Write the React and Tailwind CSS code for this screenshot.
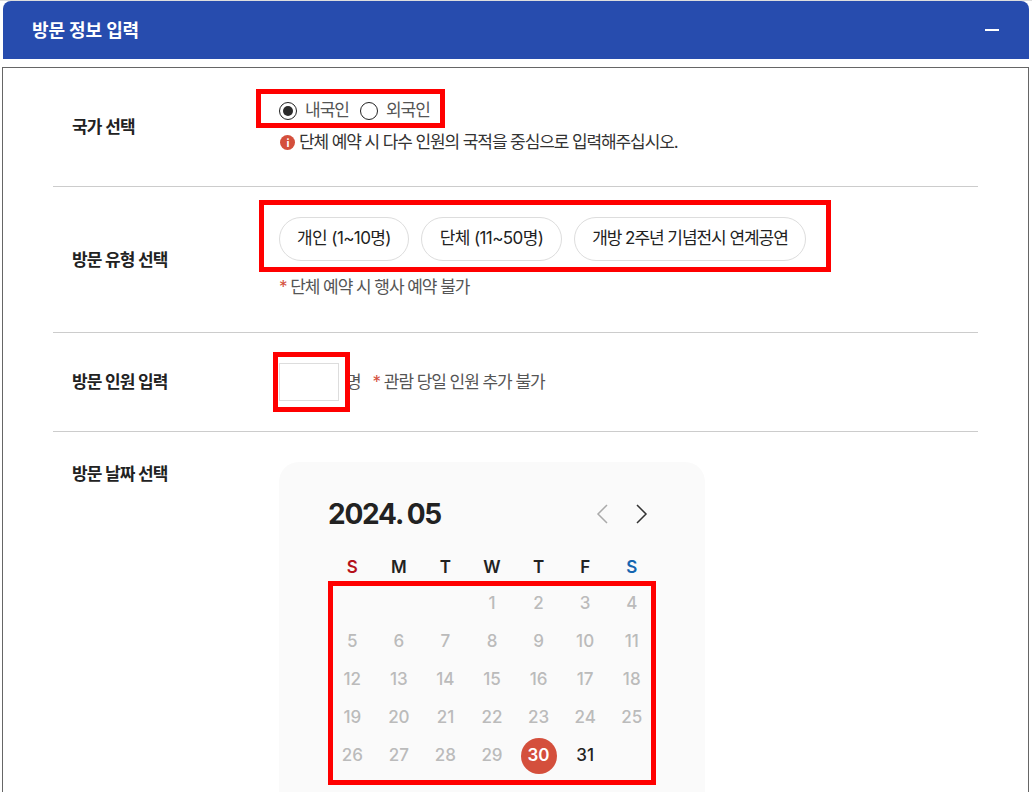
const weekdays = [
  { label: "S", color: "text-[#b5121b]" },
  { label: "M", color: "text-[#222222]" },
  { label: "T", color: "text-[#222222]" },
  { label: "W", color: "text-[#222222]" },
  { label: "T", color: "text-[#222222]" },
  { label: "F", color: "text-[#222222]" },
  { label: "S", color: "text-[#1565b0]" },
];

const days = [null, null, null];
for (let d = 1; d <= 31; d++) days.push(d);

function Radio({ label, checked }) {
  return (
    <label className="flex items-center gap-[8px]">
      <span className="flex h-[18px] w-[18px] items-center justify-center rounded-full border border-[#222222] bg-white">
        {checked && <span className="h-[10px] w-[10px] rounded-full bg-[#2b2b2b]" />}
      </span>
      <span>{label}</span>
    </label>
  );
}

function Pill({ children, className }) {
  return (
    <button
      className={`flex h-[44px] items-center justify-center rounded-full border border-[#dddddd] bg-white text-[17px] text-[#222222] ${className}`}
    >
      {children}
    </button>
  );
}

function Mark() {
  return <span className="text-[#d44f3c]">* </span>;
}

function Day({ day }) {
  if (!day) return <div className="h-[38px]" />;
  if (day === 30) {
    return (
      <div className="flex h-[38px] items-center justify-center">
        <span className="flex h-[36px] w-[36px] items-center justify-center rounded-full bg-[#d44f3c] font-semibold text-white">
          30
        </span>
      </div>
    );
  }
  return (
    <div
      className={`flex h-[38px] items-center justify-center ${
        day === 31 ? "text-[#222222]" : "text-[#bbbbbb]"
      }`}
    >
      {day}
    </div>
  );
}

export default function App() {
  return (
    <div className="h-[792px] overflow-hidden border-t border-[#dddddd] bg-white pl-[2px] pr-[3px] font-['Inter','Noto_Sans_CJK_KR',sans-serif]">
      {/* Header */}
      <div className="ml-px flex h-[58px] items-center justify-between rounded-t-[8px] bg-[#274cae] pl-[29px] pr-[30px]">
        <h2 className="text-[18px] font-bold tracking-[-0.1px] text-white">방문 정보 입력</h2>
        <span className="h-[2px] w-[14px] bg-white" />
      </div>

      <div className="mt-[8px] border border-[#666666] px-[50px]">
        {/* 국가 선택 */}
        <div className="flex h-[119px] border-b border-[#cccccc] pl-[19px]">
          <div className="w-[207px] pt-[47px] text-[17px] font-semibold tracking-[-0.8px] text-[#222222]">
            국가 선택
          </div>
          <div className="pt-[32px]">
            <div className="relative flex h-[20px] w-fit items-center gap-[11px] pt-px text-[17px] tracking-[-1px] text-[#555555]">
              <Radio label="내국인" checked />
              <Radio label="외국인" />
              <span className="absolute -bottom-[8px] -left-[23px] -right-[15px] -top-[11px] border-[5px] border-[#ff0000]" />
            </div>
            <p className="ml-px mt-[10px] flex items-center gap-[4px] text-[17px] tracking-[-1.1px] text-[#333333]">
              <span className="flex h-[15px] w-[15px] items-center justify-center rounded-full bg-[#d44f3c] text-[11px] font-bold text-white">
                i
              </span>
              단체 예약 시 다수 인원의 국적을 중심으로 입력해주십시오.
            </p>
          </div>
        </div>

        {/* 방문 유형 선택 */}
        <div className="flex h-[146px] border-b border-[#cccccc] pl-[19px]">
          <div className="w-[207px] pt-[61px] text-[17px] font-semibold tracking-[-0.85px] text-[#222222]">
            방문 유형 선택
          </div>
          <div className="pt-[30px]">
            <div className="relative flex w-fit gap-[12px]">
              <Pill className="w-[130px] tracking-[-0.6px]">개인 (1~10명)</Pill>
              <Pill className="w-[141px] tracking-[-0.6px]">단체 (11~50명)</Pill>
              <Pill className="w-[232px] tracking-[-1.05px]">개방 2주년 기념전시 연계공연</Pill>
              <span className="absolute -bottom-[11px] -left-[20px] -right-[25px] -top-[17px] border-[5px] border-[#ff0000]" />
            </div>
            <p className="mt-[14px] text-[17px] tracking-[-1.05px] text-[#555555]">
              <Mark />단체 예약 시 행사 예약 불가
            </p>
          </div>
        </div>

        {/* 방문 인원 입력 */}
        <div className="flex h-[99px] items-center border-b border-[#cccccc] pl-[19px]">
          <div className="w-[207px] pt-px text-[17px] font-semibold tracking-[-0.85px] text-[#222222]">
            방문 인원 입력
          </div>
          <div className="flex items-center text-[17px] tracking-[-1.05px] text-[#555555]">
            <div className="relative">
              <input className="block h-[38px] w-[60px] border border-[#dddddd] bg-white" />
              <span className="absolute -inset-y-[11px] -left-[6px] -right-[11px] border-[5px] border-[#ff0000]" />
            </div>
            <span className="ml-[7px] pt-px">명</span>
            <span className="ml-[12px] pt-px">
              <Mark />관람 당일 인원 추가 불가
            </span>
          </div>
        </div>

        {/* 방문 날짜 선택 */}
        <div className="flex pl-[19px]">
          <div className="w-[207px] pt-[30px] text-[17px] font-semibold tracking-[-0.85px] text-[#222222]">
            방문 날짜 선택
          </div>
          <div className="mt-[30px] h-[400px] w-[426px] rounded-[20px] bg-[#fafafa] px-[50px] pt-[33px]">
            <div className="flex h-[38px] items-center justify-between">
              <span className="-ml-px text-[28px] font-bold tracking-[-1.2px] text-[#222222] [word-spacing:-1px]">
                2024. 05
              </span>
              <div className="flex items-center gap-[28px] pr-[7px]">
                <svg width="12" height="20" viewBox="0 0 12 20" fill="none" stroke="#aaaaaa" strokeWidth="1.5">
                  <path d="M11 1 L2 10 L11 19" />
                </svg>
                <svg width="12" height="20" viewBox="0 0 12 20" fill="none" stroke="#333333" strokeWidth="1.5">
                  <path d="M1 1 L10 10 L1 19" />
                </svg>
              </div>
            </div>
            <div className="mt-[23px] grid grid-cols-7 text-[17px] font-semibold">
              {weekdays.map((w, i) => (
                <div key={i} className={`flex h-[24px] items-center justify-center ${w.color}`}>
                  {w.label}
                </div>
              ))}
            </div>
            <div className="relative mt-[5px] grid grid-cols-7 text-[17px] font-medium">
              {days.map((d, i) => (
                <Day key={i} day={d} />
              ))}
              <span className="absolute -bottom-[10px] -left-[1px] -right-[1px] -top-[4px] border-[5px] border-[#ff0000]" />
            </div>
          </div>
        </div>
      </div>
    </div>
  );
}
